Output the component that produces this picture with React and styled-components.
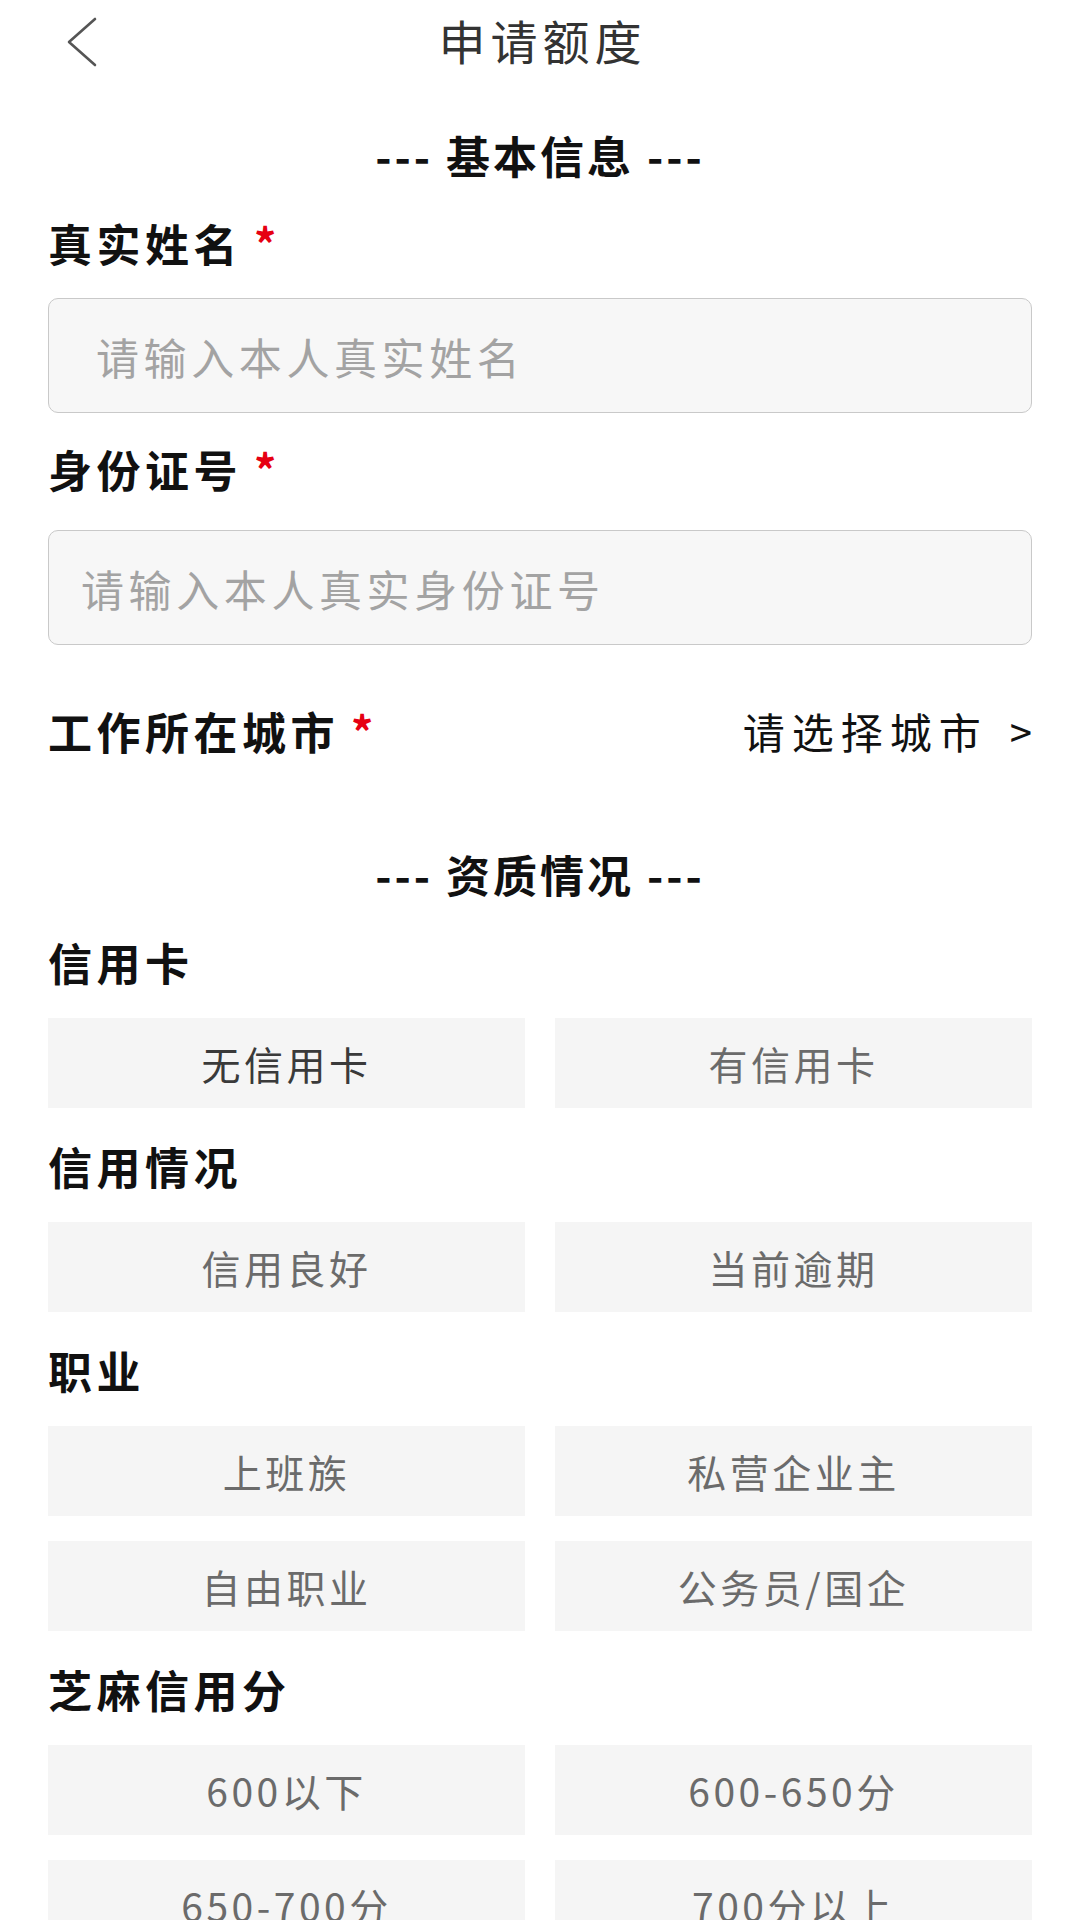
import React, { useState } from "react";
import styled, { createGlobalStyle } from "styled-components";

const GlobalStyle = createGlobalStyle`
  * {
    box-sizing: border-box;
  }
  body {
    margin: 0;
    background: #ffffff;
    font-family: "Noto Sans CJK SC", "Noto Sans", sans-serif;
    color: #111;
  }
`;

const groups = [
  { title: "信用卡", options: ["无信用卡", "有信用卡"] },
  { title: "信用情况", options: ["信用良好", "当前逾期"] },
  { title: "职业", options: ["上班族", "私营企业主", "自由职业", "公务员/国企"] },
  { title: "芝麻信用分", options: ["600以下", "600-650分", "650-700分", "700分以上"] },
];

const App = () => {
  const [picked, setPicked] = useState({ 信用卡: "无信用卡" });

  return (
    <Page>
      <GlobalStyle />
      <Header>
        <BackButton type="button" aria-label="返回">
          <svg width="32" height="50" viewBox="0 0 32 50">
            <polyline
              points="29,2 3,25 29,48"
              fill="none"
              stroke="#555"
              strokeWidth="2.6"
              strokeLinecap="round"
              strokeLinejoin="round"
            />
          </svg>
        </BackButton>
        <Title>申请额度</Title>
        <span />
      </Header>

      <Content>
        <SectionTitle first>--- 基本信息 ---</SectionTitle>

        <FieldLabel top={44} bottom={33}>
          真实姓名<Star>*</Star>
        </FieldLabel>
        <TextInput placeholder="请输入本人真实姓名" indent={47} />

        <FieldLabel top={34} bottom={39}>
          身份证号<Star>*</Star>
        </FieldLabel>
        <TextInput placeholder="请输入本人真实身份证号" indent={32} />

        <CityRow>
          <RowLabel>
            工作所在城市<Star>*</Star>
          </RowLabel>
          <CityPicker type="button">
            请选择城市<Arrow>&gt;</Arrow>
          </CityPicker>
        </CityRow>

        <SectionTitle>--- 资质情况 ---</SectionTitle>

        {groups.map((g) => (
          <Group key={g.title}>
            <GroupLabel>{g.title}</GroupLabel>
            <OptionGrid>
              {g.options.map((o) => (
                <Option
                  key={o}
                  type="button"
                  active={picked[g.title] === o}
                  onClick={() => setPicked({ ...picked, [g.title]: o })}
                >
                  {o}
                </Option>
              ))}
            </OptionGrid>
          </Group>
        ))}
      </Content>
    </Page>
  );
};

const Page = styled.div`
  width: 1080px;
  min-height: 1920px;
  background: #fff;
`;

const Header = styled.header`
  height: 88px;
  display: grid;
  grid-template-columns: 1fr auto 1fr;
  align-items: center;
  padding: 0 66px;
`;

const BackButton = styled.button`
  justify-self: start;
  display: flex;
  padding: 0;
  margin-top: -4px;
  border: none;
  background: none;
`;

const Title = styled.h1`
  margin: 0 -5px 10px 0;
  font-size: 47px;
  line-height: 47px;
  font-weight: 400;
  letter-spacing: 5px;
  color: #333;
`;

const Content = styled.main`
  display: flex;
  flex-direction: column;
  padding: 0 48px;
`;

const SectionTitle = styled.h2`
  margin: ${(p) => (p.first ? "45px" : "99px")} 0 0;
  text-align: center;
  font-size: 44px;
  line-height: 44px;
  font-weight: 700;
  letter-spacing: 3px;
  color: #111;
`;

const FieldLabel = styled.label`
  display: flex;
  align-items: center;
  margin: ${(p) => p.top}px 0 ${(p) => p.bottom}px;
  font-size: 44px;
  line-height: 44px;
  font-weight: 700;
  letter-spacing: 4.5px;
  color: #111;
`;

const Star = styled.span`
  margin-left: 12px;
  color: #e60012;
  font-size: 44px;
  font-weight: 700;
  line-height: 42px;
  letter-spacing: 0;
  align-self: flex-start;
`;

const TextInput = styled.input`
  width: 100%;
  height: 115px;
  padding: 0 24px 0 ${(p) => p.indent}px;
  border: 1.5px solid #c9c9c9;
  border-radius: 10px;
  background: #f7f7f7;
  font-family: inherit;
  font-size: 43px;
  letter-spacing: 4.6px;
  color: #333;
  outline: none;

  &::placeholder {
    color: #a3a3a3;
  }
`;

const CityRow = styled.div`
  display: flex;
  align-items: center;
  justify-content: space-between;
  margin-top: 64px;
  height: 44px;
`;

const RowLabel = styled.span`
  display: flex;
  align-items: center;
  font-size: 44px;
  line-height: 44px;
  font-weight: 700;
  letter-spacing: 4.5px;
  color: #111;
`;

const CityPicker = styled.button`
  display: flex;
  align-items: center;
  padding: 0;
  border: none;
  background: none;
  font-family: inherit;
  font-size: 42px;
  line-height: 44px;
  letter-spacing: 7px;
  color: #111;
`;

const Arrow = styled.span`
  margin-left: 22px;
  letter-spacing: 0;
  font-size: 40px;
`;

const Group = styled.section`
  display: flex;
  flex-direction: column;
  margin-top: 36px;

  &:first-of-type {
    margin-top: 44px;
  }
`;

const GroupLabel = styled.h3`
  margin: 0 0 34px;
  font-size: 44px;
  line-height: 44px;
  font-weight: 700;
  letter-spacing: 4.5px;
  color: #111;
`;

const OptionGrid = styled.div`
  display: grid;
  grid-template-columns: 1fr 1fr;
  column-gap: 30px;
  row-gap: 25px;
`;

const Option = styled.button`
  height: 90px;
  display: flex;
  align-items: center;
  justify-content: center;
  border: none;
  border-radius: 0;
  background: #f5f5f5;
  font-family: inherit;
  font-size: 39px;
  letter-spacing: 3.5px;
  color: ${(p) => (p.active ? "#3a3a3a" : "#6b6b6b")};
`;

export default App;
